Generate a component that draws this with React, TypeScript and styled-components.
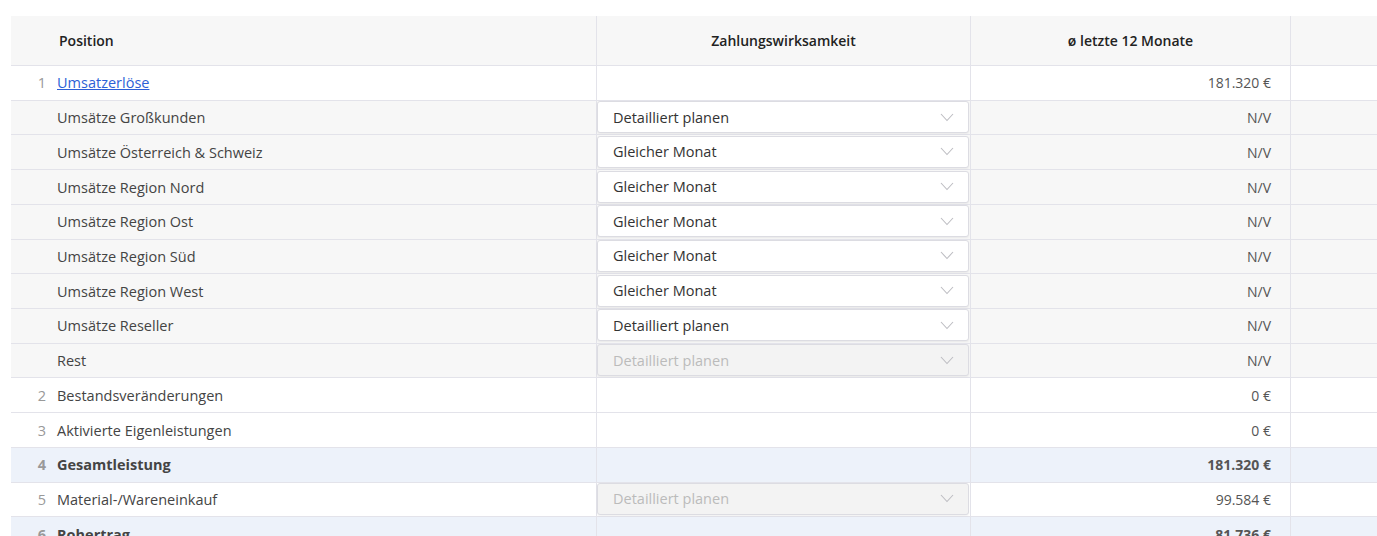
import React from "react";
import styled, { createGlobalStyle, css } from "styled-components";

const Global = createGlobalStyle`
  html, body { margin: 0; padding: 0; overflow: hidden; background: #fff; }
  body { font-family: "Open Sans", "Noto Sans", sans-serif; color: #444; }
`;

const Page = styled.div`
  padding: 16px 0 0 11px;
`;

const Table = styled.div`
  display: flex;
  flex-direction: column;
  width: 1400px;
`;

const cols = css`
  display: grid;
  grid-template-columns: 586px 374px 320px 1fr;
`;

const HeaderRow = styled.div`
  ${cols};
  height: 49px;
  background: #f7f7f7;
  border-bottom: 1px solid #e3e3ea;
`;

const HeadCell = styled.div<{ $align?: "left" | "center" }>`
  display: flex;
  align-items: center;
  padding-bottom: 1px;
  justify-content: ${(p) => (p.$align === "left" ? "flex-start" : "center")};
  padding-left: ${(p) => (p.$align === "left" ? "48px" : "0")};
  border-right: 1px solid #e3e3ea;
  font-size: 14px;
  font-weight: 600;
  color: #222;
  &:last-child { border-right: none; }
`;

type Kind = "main" | "sub" | "total";

const Row = styled.div<{ $kind: Kind }>`
  ${cols};
  height: 34.72px;
  box-sizing: border-box;
  border-bottom: 1px solid #e3e3ea;
  background: ${(p) =>
    p.$kind === "sub" ? "#f7f7f7" : p.$kind === "total" ? "#edf2fa" : "#fff"};
  font-weight: ${(p) => (p.$kind === "total" ? 700 : 400)};
`;

const Cell = styled.div`
  display: flex;
  align-items: center;
  border-right: 1px solid #e3e3ea;
  min-width: 0;
  &:last-child { border-right: none; }
`;

const PosCell = styled(Cell)`
  font-size: 14.5px;
  color: #444;
`;

const Num = styled.span`
  width: 35px;
  text-align: right;
  padding-right: 11px;
  color: #999;
  flex: none;
`;

const Link = styled.a`
  color: #2d5fd6;
  text-decoration: underline;
  cursor: pointer;
`;

const SelectCell = styled(Cell)`
  padding: 0 1px 1px 0;
`;

const Select = styled.div<{ $disabled?: boolean }>`
  flex: 1;
  height: 32px;
  box-sizing: border-box;
  display: flex;
  align-items: center;
  justify-content: space-between;
  padding: 0 14px 0 15px;
  border: 1px solid #dcdce2;
  border-radius: 3px;
  box-shadow: 0 1px 2px rgba(0, 0, 0, 0.06);
  background: ${(p) => (p.$disabled ? "#f3f3f3" : "#fff")};
  color: ${(p) => (p.$disabled ? "#bbb" : "#333")};
  font-size: 14.5px;
`;

const ValueCell = styled(Cell)`
  justify-content: flex-end;
  padding-right: 19px;
  font-size: 14px;
  color: #555;
`;

const Chevron = () => (
  <svg width="14" height="9" viewBox="0 0 14 9" fill="none">
    <path d="M1 1l6 6.5L13 1" stroke="#bdbdc2" strokeWidth="1.1" />
  </svg>
);

type Item = {
  num?: number;
  label: string;
  kind: Kind;
  link?: boolean;
  select?: { value: string; disabled?: boolean };
  value: string;
};

const items: Item[] = [
  { num: 1, label: "Umsatzerlöse", kind: "main", link: true, value: "181.320 €" },
  { label: "Umsätze Großkunden", kind: "sub", select: { value: "Detailliert planen" }, value: "N/V" },
  { label: "Umsätze Österreich & Schweiz", kind: "sub", select: { value: "Gleicher Monat" }, value: "N/V" },
  { label: "Umsätze Region Nord", kind: "sub", select: { value: "Gleicher Monat" }, value: "N/V" },
  { label: "Umsätze Region Ost", kind: "sub", select: { value: "Gleicher Monat" }, value: "N/V" },
  { label: "Umsätze Region Süd", kind: "sub", select: { value: "Gleicher Monat" }, value: "N/V" },
  { label: "Umsätze Region West", kind: "sub", select: { value: "Gleicher Monat" }, value: "N/V" },
  { label: "Umsätze Reseller", kind: "sub", select: { value: "Detailliert planen" }, value: "N/V" },
  { label: "Rest", kind: "sub", select: { value: "Detailliert planen", disabled: true }, value: "N/V" },
  { num: 2, label: "Bestandsveränderungen", kind: "main", value: "0 €" },
  { num: 3, label: "Aktivierte Eigenleistungen", kind: "main", value: "0 €" },
  { num: 4, label: "Gesamtleistung", kind: "total", value: "181.320 €" },
  { num: 5, label: "Material-/Wareneinkauf", kind: "main", select: { value: "Detailliert planen", disabled: true }, value: "99.584 €" },
  { num: 6, label: "Rohertrag", kind: "total", value: "81.736 €" },
  { num: 7, label: "Personalaufwand", kind: "main", value: "0 €" },
];

export default function App() {
  return (
    <Page>
      <Global />
      <Table>
        <HeaderRow>
          <HeadCell $align="left">Position</HeadCell>
          <HeadCell>Zahlungswirksamkeit</HeadCell>
          <HeadCell>ø letzte 12 Monate</HeadCell>
          <HeadCell />
        </HeaderRow>
        {items.map((it, i) => (
          <Row key={i} $kind={it.kind}>
            <PosCell>
              <Num>{it.num ?? ""}</Num>
              {it.link ? <Link>{it.label}</Link> : <span>{it.label}</span>}
            </PosCell>
            <SelectCell>
              {it.select && (
                <Select $disabled={it.select.disabled}>
                  <span>{it.select.value}</span>
                  <Chevron />
                </Select>
              )}
            </SelectCell>
            <ValueCell>{it.value}</ValueCell>
            <Cell />
          </Row>
        ))}
      </Table>
    </Page>
  );
}
